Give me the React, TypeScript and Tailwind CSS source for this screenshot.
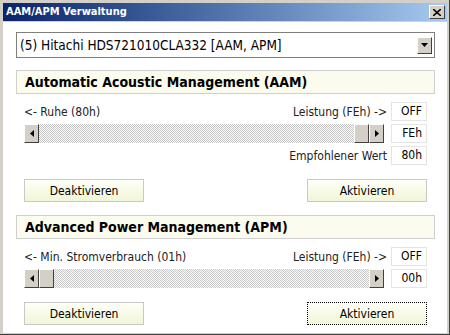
import React from 'react';

const font = { fontFamily: '"DejaVu Sans Condensed", "DejaVu Sans", sans-serif', fontStretch: 'condensed' };

const ValueBox: React.FC<{ value: string }> = ({ value }) => (
  <div className="w-[36px] h-[19px] border border-[#e4e4e4] bg-white text-right pr-[4px] leading-[17px] text-[12px] text-black">
    {value}
  </div>
);

const Arrow: React.FC<{ dir: 'left' | 'right' }> = ({ dir }) => (
  <div className="w-[15px] h-[19px] bg-[#d4d0c8] border border-t-white border-l-white border-r-[#404040] border-b-[#404040] flex items-center justify-center">
    <svg width="4" height="7" viewBox="0 0 4 7">
      {dir === 'left' ? <polygon points="4,0 4,7 0,3.5" fill="#000" /> : <polygon points="0,0 0,7 4,3.5" fill="#000" />}
    </svg>
  </div>
);

const Thumb: React.FC = () => (
  <div className="w-[15px] h-[19px] bg-[#d4d0c8] border border-t-white border-l-white border-r-[#404040] border-b-[#404040]" />
);

const ScrollBar: React.FC<{ thumbRight: boolean }> = ({ thumbRight }) => (
  <div className="flex w-[360px] h-[19px]">
    <Arrow dir="left" />
    {!thumbRight && <Thumb />}
    <div className="flex-1 bg-[repeating-conic-gradient(#c4c4c4_0%_25%,#ffffff_0%_50%)] bg-[length:2px_2px]" />
    {thumbRight && <Thumb />}
    <Arrow dir="right" />
  </div>
);

const Button: React.FC<{ label: string; focused?: boolean }> = ({ label, focused }) => (
  <button
    className={
      'w-[120px] h-[23px] text-[12px] text-black bg-gradient-to-b from-[#fefff8] to-[#f0f6d6] border ' +
      (focused ? 'border-dotted border-black' : 'border-[#c8c8c8]')
    }
  >
    {label}
  </button>
);

const Header: React.FC<{ title: string }> = ({ title }) => (
  <div className="h-[24px] border border-[#cfcfcf] bg-[#fbfbee] pl-[8px] flex items-center font-bold text-[14px] text-black">
    {title}
  </div>
);

const App: React.FC = () => {
  return (
    <div className="w-[450px] h-[335px] bg-[#d4d0c8] border-r border-b border-[#404040] p-[2px] pt-[3px] pl-[3px]" style={font}>
      <div className="h-[18px] bg-gradient-to-r from-[#0a246a] to-[#a6caf0] flex items-center justify-between pl-[3px] pr-[2px]">
        <span className="text-white font-bold text-[11px]">AAM/APM Verwaltung</span>
        <div className="w-[16px] h-[14px] bg-[#d4d0c8] border border-t-white border-l-white border-r-[#404040] border-b-[#404040] flex items-center justify-center">
          <svg width="8" height="7" viewBox="0 0 8 7">
            <path d="M0 0 L8 7 M8 0 L0 7" stroke="#000" strokeWidth="1.6" />
          </svg>
        </div>
      </div>
      <div className="bg-white h-[311px] mt-[1px] pl-[13px] pr-[12px] pt-[10px]">
        <div className="h-[26px] border border-[#7f7f7f] flex items-center justify-between pl-[3px] pr-[2px]">
          <span className="text-[13.5px] text-black">(5) Hitachi HDS721010CLA332 [AAM, APM]</span>
          <div className="w-[15px] h-[17px] bg-[#d4d0c8] border border-t-white border-l-white border-r-[#404040] border-b-[#404040] flex items-center justify-center">
            <svg width="7" height="4" viewBox="0 0 7 4">
              <polygon points="0,0 7,0 3.5,4" fill="#000" />
            </svg>
          </div>
        </div>

        <div className="mt-[12px]">
          <Header title="Automatic Acoustic Management (AAM)" />
        </div>
        <div className="px-[8px] text-[12px] text-[#222]">
          <div className="mt-[8px] flex items-center justify-between">
            <span>&lt;- Ruhe (80h)</span>
            <div className="flex items-center gap-[4px]">
              <span>Leistung (FEh) -&gt;</span>
              <ValueBox value="OFF" />
            </div>
          </div>
          <div className="mt-[3px] flex items-center justify-between">
            <ScrollBar thumbRight />
            <ValueBox value="FEh" />
          </div>
          <div className="mt-[3px] flex items-center justify-end gap-[4px]">
            <span>Empfohlener Wert</span>
            <ValueBox value="80h" />
          </div>
          <div className="mt-[14px] flex justify-between">
            <Button label="Deaktivieren" />
            <Button label="Aktivieren" />
          </div>
        </div>

        <div className="mt-[13px]">
          <Header title="Advanced Power Management (APM)" />
        </div>
        <div className="px-[8px] text-[12px] text-[#222]">
          <div className="mt-[8px] flex items-center justify-between">
            <span>&lt;- Min. Stromverbrauch (01h)</span>
            <div className="flex items-center gap-[4px]">
              <span>Leistung (FEh) -&gt;</span>
              <ValueBox value="OFF" />
            </div>
          </div>
          <div className="mt-[3px] flex items-center justify-between">
            <ScrollBar thumbRight={false} />
            <ValueBox value="00h" />
          </div>
          <div className="mt-[14px] flex justify-between">
            <Button label="Deaktivieren" />
            <Button label="Aktivieren" focused />
          </div>
        </div>
      </div>
    </div>
  );
};

export default App;
